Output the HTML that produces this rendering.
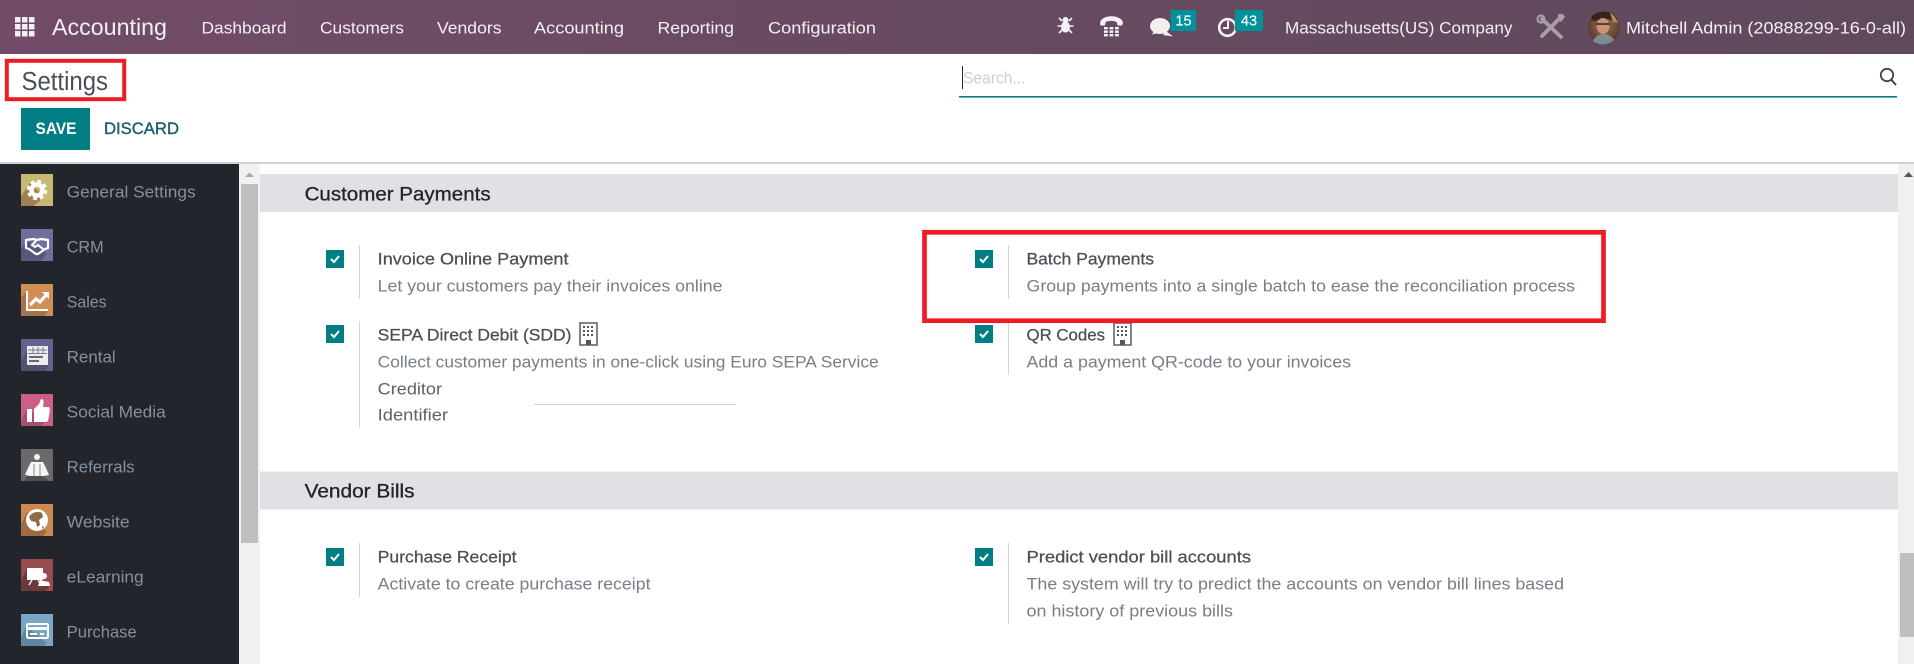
<!DOCTYPE html>
<html lang="en">
<head>
<meta charset="utf-8">
<title>Settings</title>
<style>
html,body{margin:0;padding:0;background:#fff;width:1914px;height:664px;overflow:hidden}
svg{display:block}
text{font-family:"Liberation Sans",sans-serif;white-space:pre}
.nav{fill:#f4eff3;font-size:17px}
.side{fill:#8390a0;font-size:16.5px}
.h{fill:#4a4e56;font-size:17px;stroke:#4a4e56;stroke-width:.25;transform:translateY(-.7px)}
.d{fill:#787e86;font-size:17px;transform:translateY(-.7px)}
.d2{fill:#5d6269;font-size:17px;transform:translateY(-.7px)}
.sec{fill:#212529;font-size:19px;stroke:#212529;stroke-width:.3}
</style>
</head>
<body>
<svg xmlns="http://www.w3.org/2000/svg" width="1914" height="664" viewBox="0 0 1914 664">
<defs>
<linearGradient id="navg" x1="0" x2="1" y1="0" y2="0"><stop offset="0" stop-color="#714b67"/><stop offset="1" stop-color="#5f4a5c"/></linearGradient>
<radialGradient id="av" cx=".5" cy=".45" r=".6"><stop offset="0" stop-color="#a4714f"/><stop offset="1" stop-color="#4f3428"/></radialGradient>
</defs>
<rect width="1914" height="664" fill="#fff"/>

<!-- navbar -->
<rect width="1914" height="54" fill="url(#navg)"/>
<g fill="#f3eef2">
<rect x="15" y="17" width="5.500" height="5.500"/><rect x="22" y="17" width="5.500" height="5.500"/><rect x="29" y="17" width="5.500" height="5.500"/>
<rect x="15" y="24" width="5.500" height="5.500"/><rect x="22" y="24" width="5.500" height="5.500"/><rect x="29" y="24" width="5.500" height="5.500"/>
<rect x="15" y="31" width="5.500" height="5.500"/><rect x="22" y="31" width="5.500" height="5.500"/><rect x="29" y="31" width="5.500" height="5.500"/>
</g>
<text x="52" y="35" font-size="23" fill="#f4eff3" textLength="115" lengthAdjust="spacingAndGlyphs">Accounting</text>
<text class="nav" x="201.500" y="33.500" textLength="85" lengthAdjust="spacingAndGlyphs">Dashboard</text>
<text class="nav" x="320" y="33.500" textLength="84" lengthAdjust="spacingAndGlyphs">Customers</text>
<text class="nav" x="437" y="33.500" textLength="64.500" lengthAdjust="spacingAndGlyphs">Vendors</text>
<text class="nav" x="534" y="33.500" textLength="90" lengthAdjust="spacingAndGlyphs">Accounting</text>
<text class="nav" x="657.500" y="33.500" textLength="76.500" lengthAdjust="spacingAndGlyphs">Reporting</text>
<text class="nav" x="768" y="33.500" textLength="108" lengthAdjust="spacingAndGlyphs">Configuration</text>

<!-- systray: bug -->
<g fill="#f6f2f5" stroke="#f6f2f5">
<ellipse cx="1065.500" cy="27" rx="4.500" ry="5.500" stroke="none"/>
<circle cx="1065.500" cy="20" r="3" stroke="none"/>
<path d="M1059 18l3 3M1072 18l-3 3M1057.500 26h4M1073.500 26h-4M1059 33l3-3M1072 33l-3-3" stroke-width="1.600" fill="none"/>
</g>
<!-- phone -->
<path d="M1100 23c1-9 22-9 23 0l-1 2.500h-4.500l-.8-3.500c-3-1.500-8-1.500-11 0l-.8 3.500h-4.500z" fill="#f6f2f5"/>
<g fill="#f6f2f5">
<rect x="1104" y="27" width="3.800" height="2.400"/><rect x="1109.500" y="27" width="3.800" height="2.400"/><rect x="1115" y="27" width="3.800" height="2.400"/>
<rect x="1104" y="30.500" width="3.800" height="2.400"/><rect x="1109.500" y="30.500" width="3.800" height="2.400"/><rect x="1115" y="30.500" width="3.800" height="2.400"/>
<rect x="1104" y="34" width="3.800" height="2.400"/><rect x="1109.500" y="34" width="3.800" height="2.400"/><rect x="1115" y="34" width="3.800" height="2.400"/>
</g>
<!-- chat -->
<ellipse cx="1160" cy="26" rx="10" ry="8" fill="#f3efef"/>
<path d="M1154 31l-2 3.500 6-1.500zM1166 31l7 5.500-10-1.500z" fill="#f3efef"/>
<rect x="1170.700" y="10" width="25.300" height="21" fill="#01919b"/>
<text x="1183.500" y="25.500" font-size="14.500" fill="#f2fafa" text-anchor="middle" stroke="#f2fafa" stroke-width=".2">15</text>
<!-- clock -->
<circle cx="1227.500" cy="27.500" r="8.300" fill="none" stroke="#f6f2f5" stroke-width="2.600"/>
<path d="M1228 21v7h-5" fill="none" stroke="#f6f2f5" stroke-width="2"/>
<rect x="1235" y="10" width="28" height="21" fill="#01919b"/>
<text x="1249" y="25.500" font-size="14.500" fill="#f2fafa" text-anchor="middle" stroke="#f2fafa" stroke-width=".2">43</text>

<text class="nav" x="1285" y="33.500" textLength="227.500" lengthAdjust="spacingAndGlyphs">Massachusetts(US) Company</text>
<!-- tools -->
<g fill="none" stroke="#a99da6" stroke-linecap="round">
<path d="M1542 19l19 18" stroke-width="3.800"/>
<path d="M1560 18l-18 18" stroke-width="3.800"/>
<circle cx="1541" cy="19" r="3.500" stroke-width="2.200"/>
</g>
<path d="M1558 14h5l2 3-4 5-3-3z" fill="#a99da6"/>
<!-- avatar -->
<circle cx="1604" cy="27" r="16" fill="url(#av)"/>
<path d="M1592 16c4-5 17-6 22-1l3 4-3 2c-6-3-13-3-19 0l-4-1z" fill="#33241f"/>
<ellipse cx="1603" cy="26" rx="6.500" ry="8" fill="#c99276"/>
<path d="M1596 24h14" stroke="#2b2320" stroke-width="1.500"/>
<path d="M1593 41c3-6 7-7 11-7s8 2 10 6a16 16 0 0 1-21 1z" fill="#7d8c92"/>
<path d="M1610 13c3 1 6 5 8 10l-5-1z" fill="#b58c57"/>
<text class="nav" x="1626" y="33.500" textLength="280" lengthAdjust="spacingAndGlyphs">Mitchell Admin (20888299-16-0-all)</text>

<!-- control panel -->
<rect x="6.800" y="60.800" width="117.400" height="38.400" fill="none" stroke="#ee1c25" stroke-width="4"/>
<text x="21.500" y="90" font-size="25.500" fill="#4a5058" textLength="86.500" lengthAdjust="spacingAndGlyphs">Settings</text>
<rect x="21" y="108" width="69" height="42" fill="#017e84"/>
<text x="35.500" y="134" font-size="17" font-weight="700" fill="#fff" textLength="41" lengthAdjust="spacingAndGlyphs">SAVE</text>
<text x="104" y="134" font-size="17" fill="#1c5d74" stroke="#1c5d74" stroke-width=".4" textLength="75" lengthAdjust="spacingAndGlyphs">DISCARD</text>

<!-- search -->
<rect x="959" y="96" width="938" height="1.600" fill="#017e84"/>
<rect x="962" y="66" width="1" height="23" fill="#222"/>
<text x="963" y="83.500" font-size="17" fill="#c9d0d0" textLength="62.500" lengthAdjust="spacingAndGlyphs">Search...</text>
<circle cx="1887" cy="75" r="6.200" fill="none" stroke="#3d4650" stroke-width="1.800"/>
<path d="M1891.500 80l4.500 5" stroke="#3d4650" stroke-width="2"/>

<rect x="0" y="162" width="1914" height="2" fill="#ced0d8"/>

<!-- sidebar -->
<rect x="0" y="164" width="239" height="500" fill="#22252b"/>
<rect x="239" y="164" width="21" height="500" fill="#f1f1f1"/>
<rect x="241" y="184" width="17" height="359" fill="#bfbfbf"/>
<path d="M245 177l4.500-4.500 4.500 4.500z" fill="#a9a9a9"/>

<!-- 1 general settings -->
<g transform="translate(21,174)">
<rect width="32" height="32" fill="#c6b970"/>
<path d="M0 22L9 9 23 23 13 32H0z" fill="#a27f54"/>
<circle cx="16" cy="16" r="5.500" fill="none" stroke="#fff" stroke-width="4.500"/>
<circle cx="16" cy="16" r="9" fill="none" stroke="#fff" stroke-width="2.500" stroke-dasharray="4 3.070"/>
</g>
<!-- 2 CRM -->
<g transform="translate(21,229)">
<rect width="32" height="32" fill="#6f6f9d"/>
<path d="M0 20L6 12 26 24 20 32H0z" fill="#54587a"/>
<path d="M5 11l7-1 4 1 4-1 7 1v8l-3 1-7 5h-2l-7-5-3-1z" fill="none" stroke="#fff" stroke-width="2.200" stroke-linejoin="round"/>
<path d="M15 12l-4 4 3 2 3-2 5 4" fill="none" stroke="#fff" stroke-width="2"/>
</g>
<!-- 3 sales -->
<g transform="translate(21,284)">
<rect width="32" height="32" fill="#d18f58"/>
<path d="M0 14L6 6V26H28L24 32H0z" fill="#a4744a"/>
<path d="M6 7V26H27" fill="none" stroke="#fff" stroke-width="2"/>
<path d="M9 21l6-6 4 3 7-8" fill="none" stroke="#fff" stroke-width="3.200"/>
<path d="M21 8h7v7z" fill="#fff"/>
</g>
<!-- 4 rental -->
<g transform="translate(21,339)">
<rect width="32" height="32" fill="#62628f"/>
<path d="M0 24L6 10 28 28 24 32H0z" fill="#50516f"/>
<rect x="6" y="7" width="21" height="19" fill="#ededed"/>
<path d="M7 11h19M7 14.500h19M12 8v7M17 8v7M22 8v7" stroke="#7b7b90" stroke-width="1"/>
<path d="M8 18h14M8 22h10" stroke="#3c3c48" stroke-width="1.600"/>
</g>
<!-- 5 social -->
<g transform="translate(21,394)">
<rect width="32" height="32" fill="#cc5f86"/>
<path d="M0 28L6 14 24 28 20 32H0z" fill="#a94f6d"/>
<path d="M6 15h5v13H6z" fill="#fff"/>
<path d="M13 15l5-5 2-5c3 0 3 3 2 8h6l1 3-2 11-2 1H13z" fill="#fff"/>
</g>
<!-- 6 referrals -->
<g transform="translate(21,449)">
<rect width="32" height="32" fill="#6a696b"/>
<path d="M4 32L9 14 28 32z" fill="#504f55"/>
<circle cx="16" cy="8" r="3" fill="#f5f5f5"/>
<path d="M10 13h12l3 6 3 7-5 1H9l-5-1 3-7z" fill="#f5f5f5"/>
<path d="M13 15v12M19 15v12" stroke="#8a8a8a" stroke-width="1"/>
</g>
<!-- 7 website -->
<g transform="translate(21,504)">
<rect width="32" height="32" fill="#cb8a4f"/>
<path d="M0 20L6 8 26 28 22 32H0z" fill="#9f6c3f"/>
<circle cx="16" cy="16" r="11" fill="#fff"/>
<path d="M8 13c3-5 9-6 13-4l1 4-4 3 1 5-3 2-1-5-5-1z" fill="#8c6a4a"/>
<path d="M21 22l2 1-2 2z" fill="#8c6a4a"/>
</g>
<!-- 8 eLearning -->
<g transform="translate(21,559)">
<rect width="32" height="32" fill="#964b50"/>
<path d="M0 22L6 10 28 28 24 32H0z" fill="#6b3a3b"/>
<rect x="6" y="9" width="16" height="12" fill="#fff"/>
<path d="M11 21l-3 5M17 21l3 5" stroke="#fff" stroke-width="1.300"/>
<circle cx="23" cy="17" r="3" fill="#fff"/>
<path d="M17 27l2-6 4 1 5 1 1 4z" fill="#fff"/>
</g>
<!-- 9 purchase -->
<g transform="translate(21,614)">
<rect width="32" height="32" fill="#7ba7c4"/>
<path d="M0 24L5 12 26 29 23 32H0z" fill="#5f87a1"/>
<rect x="6" y="10" width="21" height="14" rx="1.500" fill="none" stroke="#fff" stroke-width="2"/>
<rect x="6" y="13" width="21" height="3" fill="#fff"/>
<path d="M9 20h7M19 20h4" stroke="#fff" stroke-width="2"/>
</g>

<text class="side" x="66.700" y="197.700" textLength="129" lengthAdjust="spacingAndGlyphs">General Settings</text>
<text class="side" x="66.700" y="252.700" textLength="37" lengthAdjust="spacingAndGlyphs">CRM</text>
<text class="side" x="66.700" y="307.700" textLength="40" lengthAdjust="spacingAndGlyphs">Sales</text>
<text class="side" x="66.700" y="362.700" textLength="49" lengthAdjust="spacingAndGlyphs">Rental</text>
<text class="side" x="66.700" y="417.700" textLength="99" lengthAdjust="spacingAndGlyphs">Social Media</text>
<text class="side" x="66.700" y="472.700" textLength="68" lengthAdjust="spacingAndGlyphs">Referrals</text>
<text class="side" x="66.700" y="527.700" textLength="63" lengthAdjust="spacingAndGlyphs">Website</text>
<text class="side" x="66.700" y="582.700" textLength="77" lengthAdjust="spacingAndGlyphs">eLearning</text>
<text class="side" x="66.700" y="637.700" textLength="70" lengthAdjust="spacingAndGlyphs">Purchase</text>

<!-- right scrollbar -->
<rect x="1898" y="164" width="16" height="500" fill="#f0f0f0"/>
<rect x="1900" y="553" width="14" height="84" fill="#bfbfbf"/>
<path d="M1904 177l4.500-5 4.500 5z" fill="#55555c"/>

<!-- section bars -->
<rect x="260" y="174" width="1638" height="38" fill="#e0e1e5"/>
<text class="sec" x="304.600" y="200.500" textLength="186" lengthAdjust="spacingAndGlyphs">Customer Payments</text>
<rect x="260" y="471.500" width="1638" height="38" fill="#e0e1e5"/>
<text class="sec" x="304.600" y="497.500" textLength="110" lengthAdjust="spacingAndGlyphs">Vendor Bills</text>

<!-- dividers -->
<g fill="#d4d6da">
<rect x="359" y="245" width="1" height="54"/>
<rect x="359" y="321" width="1" height="107"/>
<rect x="1008" y="245" width="1" height="54"/>
<rect x="1008" y="321" width="1" height="54"/>
<rect x="359" y="543" width="1" height="54"/>
<rect x="1008" y="543" width="1" height="81"/>
</g>

<!-- checkboxes -->
<g fill="#017e84">
<rect x="326" y="250" width="18" height="18"/>
<rect x="326" y="325" width="18" height="18"/>
<rect x="975" y="250" width="18" height="18"/>
<rect x="975" y="325" width="18" height="18"/>
<rect x="326" y="548" width="18" height="18"/>
<rect x="975" y="548" width="18" height="18"/>
</g>
<g fill="none" stroke="#fff" stroke-width="2">
<path d="M331 259l3 3 5-6"/>
<path d="M331 334l3 3 5-6"/>
<path d="M980 259l3 3 5-6"/>
<path d="M980 334l3 3 5-6"/>
<path d="M331 557l3 3 5-6"/>
<path d="M980 557l3 3 5-6"/>
</g>

<!-- customer payments text -->
<text class="h" x="377.700" y="265" textLength="190.800" lengthAdjust="spacingAndGlyphs">Invoice Online Payment</text>
<text class="d" x="377.700" y="292" textLength="344.800" lengthAdjust="spacingAndGlyphs">Let your customers pay their invoices online</text>
<text class="h" x="377.700" y="341" textLength="193.800" lengthAdjust="spacingAndGlyphs">SEPA Direct Debit (SDD)</text>
<text class="d" x="377.700" y="368" textLength="501" lengthAdjust="spacingAndGlyphs">Collect customer payments in one-click using Euro SEPA Service</text>
<text class="d2" x="377.700" y="395" textLength="64.300" lengthAdjust="spacingAndGlyphs">Creditor</text>
<text class="d2" x="377.700" y="421" textLength="70.300" lengthAdjust="spacingAndGlyphs">Identifier</text>
<rect x="534" y="404" width="202" height="1" fill="#ced0d8"/>

<!-- building icons -->
<g transform="translate(579,322)">
<rect x="1" y="1" width="17" height="22" fill="#fff" stroke="#5f6670" stroke-width="1.600"/>
<g fill="#4f565f">
<rect x="4" y="4" width="2" height="2"/><rect x="8" y="4" width="2" height="2"/><rect x="12" y="4" width="2" height="2"/>
<rect x="4" y="8" width="2" height="2"/><rect x="8" y="8" width="2" height="2"/><rect x="12" y="8" width="2" height="2"/>
<rect x="4" y="12" width="2" height="2"/><rect x="8" y="12" width="2" height="2"/><rect x="12" y="12" width="2" height="2"/>
<rect x="7" y="18" width="5" height="5"/>
</g>
</g>
<g transform="translate(1113,322)">
<rect x="1" y="1" width="17" height="22" fill="#fff" stroke="#5f6670" stroke-width="1.600"/>
<g fill="#4f565f">
<rect x="4" y="4" width="2" height="2"/><rect x="8" y="4" width="2" height="2"/><rect x="12" y="4" width="2" height="2"/>
<rect x="4" y="8" width="2" height="2"/><rect x="8" y="8" width="2" height="2"/><rect x="12" y="8" width="2" height="2"/>
<rect x="4" y="12" width="2" height="2"/><rect x="8" y="12" width="2" height="2"/><rect x="12" y="12" width="2" height="2"/>
<rect x="7" y="18" width="5" height="5"/>
</g>
</g>

<text class="h" x="1026.500" y="265" textLength="127.500" lengthAdjust="spacingAndGlyphs">Batch Payments</text>
<text class="d" x="1026.500" y="292" textLength="548.500" lengthAdjust="spacingAndGlyphs">Group payments into a single batch to ease the reconciliation process</text>
<text class="h" x="1026.500" y="341" textLength="78.500" lengthAdjust="spacingAndGlyphs">QR Codes</text>
<text class="d" x="1026.500" y="368" textLength="324.500" lengthAdjust="spacingAndGlyphs">Add a payment QR-code to your invoices</text>

<!-- red highlight -->
<rect x="924.500" y="232.300" width="679" height="88.400" fill="none" stroke="#ee1c25" stroke-width="4.700"/>

<!-- vendor bills text -->
<text class="h" x="377.700" y="563" textLength="138.800" lengthAdjust="spacingAndGlyphs">Purchase Receipt</text>
<text class="d" x="377.700" y="590" textLength="272.800" lengthAdjust="spacingAndGlyphs">Activate to create purchase receipt</text>
<text class="h" x="1026.500" y="563" textLength="224.500" lengthAdjust="spacingAndGlyphs">Predict vendor bill accounts</text>
<text class="d" x="1026.500" y="590" textLength="537.500" lengthAdjust="spacingAndGlyphs">The system will try to predict the accounts on vendor bill lines based</text>
<text class="d" x="1026.500" y="617" textLength="206.500" lengthAdjust="spacingAndGlyphs">on history of previous bills</text>
</svg>
</body>
</html>
